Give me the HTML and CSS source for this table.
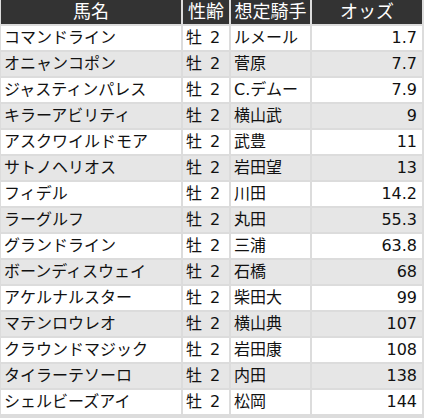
FILE: index.html
```html
<html>

<head>
    <meta charset="utf-8">
    <link rel="stylesheet" href="styles.css">
</head>

<body>
    <table class="odds">
        <thead>
            <tr>
                <th class="name">馬名</th>
                <th class="sex">性齢</th>
                <th class="jockey">想定騎手</th>
                <th class="odd">オッズ</th>
            </tr>
        </thead>
        <tbody>
            <tr><td>コマンドライン</td><td>牡&ensp;2</td><td>ルメール</td><td class="num">1.7</td></tr>
            <tr><td>オニャンコポン</td><td>牡&ensp;2</td><td>菅原</td><td class="num">7.7</td></tr>
            <tr><td>ジャスティンパレス</td><td>牡&ensp;2</td><td>C.デムー</td><td class="num">7.9</td></tr>
            <tr><td>キラーアビリティ</td><td>牡&ensp;2</td><td>横山武</td><td class="num">9</td></tr>
            <tr><td>アスクワイルドモア</td><td>牡&ensp;2</td><td>武豊</td><td class="num">11</td></tr>
            <tr><td>サトノヘリオス</td><td>牡&ensp;2</td><td>岩田望</td><td class="num">13</td></tr>
            <tr><td>フィデル</td><td>牡&ensp;2</td><td>川田</td><td class="num">14.2</td></tr>
            <tr><td>ラーグルフ</td><td>牡&ensp;2</td><td>丸田</td><td class="num">55.3</td></tr>
            <tr><td>グランドライン</td><td>牡&ensp;2</td><td>三浦</td><td class="num">63.8</td></tr>
            <tr><td>ボーンディスウェイ</td><td>牡&ensp;2</td><td>石橋</td><td class="num">68</td></tr>
            <tr><td>アケルナルスター</td><td>牡&ensp;2</td><td>柴田大</td><td class="num">99</td></tr>
            <tr><td>マテンロウレオ</td><td>牡&ensp;2</td><td>横山典</td><td class="num">107</td></tr>
            <tr><td>クラウンドマジック</td><td>牡&ensp;2</td><td>岩田康</td><td class="num">108</td></tr>
            <tr><td>タイラーテソーロ</td><td>牡&ensp;2</td><td>内田</td><td class="num">138</td></tr>
            <tr><td>シェルビーズアイ</td><td>牡&ensp;2</td><td>松岡</td><td class="num">144</td></tr>
        </tbody>
    </table>
</body>

</html>
```

FILE: styles.css
```css
body {
    margin: 0;
    padding: 0;
    background: #dcdcdc;
    font-family: "DejaVu Sans", "Noto Sans CJK JP", sans-serif;
    font-size: 17px;
    color: #111111;
}

.odds {
    border-collapse: separate;
    border-spacing: 2px;
    margin: -2px 0 0 -1px;
    background: #dcdcdc;
    table-layout: fixed;
}

.odds th,
.odds td {
    height: 24px;
    line-height: 24px;
    padding: 0 3px;
    white-space: nowrap;
    overflow: hidden;
}

.odds th {
    background: #333333;
    color: #ffffff;
    font-size: 18px;
    font-weight: normal;
    text-align: center;
}

.odds th.name {
    width: 174px;
}

.odds th.sex {
    width: 46px;
    padding: 0;
}

.odds th.jockey {
    width: 79px;
    padding: 0;
}

.odds th.odd {
    width: 104px;
}

.odds td {
    text-align: left;
    background: #ffffff;
}

.odds tbody tr:nth-child(even) td {
    background: #e6e6e6;
}

.odds td.num {
    text-align: right;
    padding-right: 5px;
}
```
